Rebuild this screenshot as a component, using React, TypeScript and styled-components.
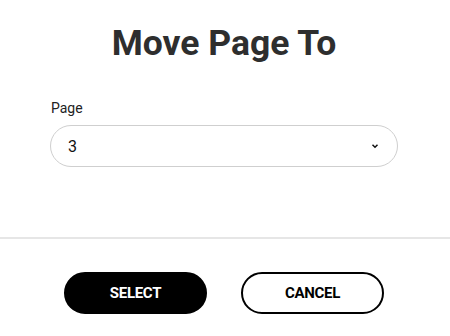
import React from "react";
import styled, { createGlobalStyle } from "styled-components";

const Global = createGlobalStyle`
  html, body { margin: 0; padding: 0; background: #fff; }
  body { font-family: Roboto, "Liberation Sans", sans-serif; }
  * { box-sizing: border-box; }
`;

const Dialog = styled.div`
  width: 450px;
  height: 336px;
  display: flex;
  flex-direction: column;
  background: #fff;
`;

const Title = styled.h1`
  margin: 22px 0 0;
  text-align: center;
  font-size: 35.5px;
  line-height: 42px;
  font-weight: 700;
  color: #2e2e2e;
  padding-right: 2px;
`;

const Body = styled.div`
  padding: 0 52px 0 50px;
  margin-top: 35px;
  display: flex;
  flex-direction: column;
`;

const Label = styled.label`
  font-size: 14px;
  line-height: 18px;
  color: #222;
  margin: 0 0 8px 1px;
`;

const SelectBox = styled.div`
  height: 42px;
  border: 1px solid #cfcfcf;
  border-radius: 21px;
  display: flex;
  align-items: center;
  justify-content: space-between;
  padding: 0 17px 0 17px;
  font-size: 16px;
  color: #111;
`;

const Divider = styled.hr`
  margin: 70px 0 0;
  border: none;
  border-top: 2px solid #e6e6e6;
  height: 0;
`;

const Actions = styled.div`
  margin-top: 33px;
  display: flex;
  justify-content: center;
  gap: 34px;
  padding-right: 2px;
`;

const Button = styled.button<{ $primary?: boolean }>`
  width: 143px;
  height: 42px;
  border-radius: 21px;
  border: 2px solid #000;
  background: ${(p) => (p.$primary ? "#000" : "#fff")};
  color: ${(p) => (p.$primary ? "#fff" : "#000")};
  font-family: Roboto, "Liberation Sans", sans-serif;
  font-weight: 700;
  font-size: 15px;
  text-transform: uppercase;
  letter-spacing: -0.3px;
  cursor: pointer;
`;

const Chevron = () => (
  <svg width="10" height="10" viewBox="0 0 10 10">
    <path d="M2.5 3.8 L5 6.2 L7.5 3.8" fill="none" stroke="#111" strokeWidth="1.5" />
  </svg>
);

export default function App() {
  return (
    <Dialog>
      <Global />
      <Title>Move Page To</Title>
      <Body>
        <Label>Page</Label>
        <SelectBox>
          <span>3</span>
          <Chevron />
        </SelectBox>
      </Body>
      <Divider />
      <Actions>
        <Button $primary>Select</Button>
        <Button>Cancel</Button>
      </Actions>
    </Dialog>
  );
}
